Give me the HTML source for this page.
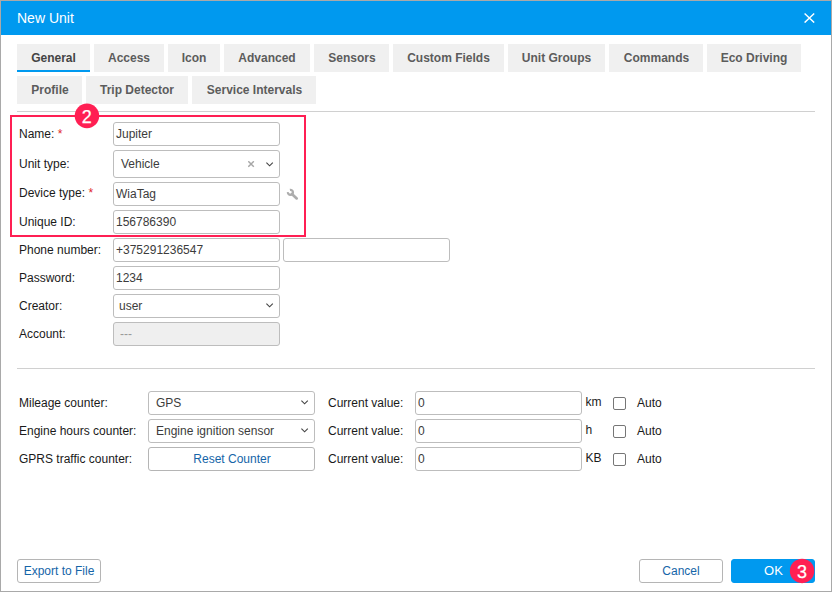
<!DOCTYPE html>
<html><head><meta charset="utf-8">
<style>
*{box-sizing:border-box;margin:0;padding:0}
html,body{width:832px;height:592px;overflow:hidden;background:#fff}
body{font-family:"Liberation Sans",Arial,sans-serif;font-size:12px;color:#222;position:relative}
.frame{position:absolute;left:0;top:0;width:832px;height:592px;border:1px solid #a9a9a9;pointer-events:none}
.title{position:absolute;left:1px;top:1px;width:830px;height:34px;background:#0099ef;color:#fff;font-size:14px;line-height:34px;padding-left:16px}
.close{position:absolute;left:804px;top:13px;width:11px;height:10px}
.tab{position:absolute;height:28px;background:#f0f0f0;color:#5c5c5c;font-weight:bold;font-size:12px;line-height:28px;text-align:center}
.tab.act{border-bottom:2px solid #0099ef;color:#444}
.hr{position:absolute;left:17px;width:798px;height:1px;background:#d0d0d0}
.lbl{position:absolute;font-size:12px;line-height:14px;color:#1a1a1a;white-space:nowrap}
.req{color:#e0262b}
.inp{position:absolute;height:24px;border:1px solid #bdbdbd;border-radius:3px;background:#fff;font-size:12px;line-height:22px;padding-left:2px;color:#3c3c3c;white-space:nowrap}
.inp.dis{background:#efefef;color:#999}
.sel{padding-left:5px}.sel7{padding-left:7px}
.chev{position:absolute;right:5px;top:8px;width:8px;height:6px}
.btn{position:absolute;height:24px;border:1px solid #b5b5b5;border-radius:3px;background:#fff;color:#1565a8;font-size:12px;line-height:22px;text-align:center}
.btn.pri{background:#0099ef;border-color:#0099ef;color:#fff;font-size:13px}
.badge{position:absolute;width:24.6px;height:24.6px;border-radius:50%;background:#ff1f53;color:#fff;font-size:17px;line-height:26px;text-align:center}
.bsvg{position:absolute;font-family:"Liberation Sans",Arial,sans-serif}
.hl{position:absolute;left:10px;top:115px;width:296px;height:122px;border:2px solid #ff1f53}
.cb{position:absolute;width:13px;height:13px;border:1px solid #767676;border-radius:2px;background:#fff}
</style></head><body>
<div class="title">New Unit</div>
<svg class="close" viewBox="0 0 11 10"><path d="M0.6 0.5L10.2 9.6M10.2 0.5L0.6 9.6" stroke="#fff" stroke-width="1.4" fill="none"/></svg>

<div class="tab act" style="left:17px;top:44px;width:73px">General</div>
<div class="tab" style="left:94px;top:44px;width:70px">Access</div>
<div class="tab" style="left:168px;top:44px;width:52px">Icon</div>
<div class="tab" style="left:224px;top:44px;width:86px">Advanced</div>
<div class="tab" style="left:314px;top:44px;width:75px;padding-left:1px">Sensors</div>
<div class="tab" style="left:393px;top:44px;width:111px">Custom Fields</div>
<div class="tab" style="left:508px;top:44px;width:97px">Unit Groups</div>
<div class="tab" style="left:609px;top:44px;width:94px;padding-left:1px">Commands</div>
<div class="tab" style="left:707px;top:44px;width:94px">Eco Driving</div>
<div class="tab" style="left:17px;top:76px;width:65px;padding-left:1px">Profile</div>
<div class="tab" style="left:86px;top:76px;width:102px">Trip Detector</div>
<div class="tab" style="left:192px;top:76px;width:124px;padding-left:1px">Service Intervals</div>
<div class="hr" style="top:111px"></div>

<div class="hl"></div>
<svg class="bsvg" style="left:70px;top:100px" width="34" height="32" viewBox="70 100 34 32"><circle cx="86.95" cy="115.85" r="12.3" fill="#ff1f53"/><text x="86.75" y="123" text-anchor="middle" font-size="18" fill="#fff" stroke="#fff" stroke-width="0.25">2</text></svg>

<div class="lbl" style="left:19px;top:127px">Name: <span class="req">*</span></div>
<div class="inp" style="left:113px;top:122px;width:167px">Jupiter</div>
<div class="lbl" style="left:19px;top:157px">Unit type:</div>
<div class="inp sel" style="left:113px;top:150px;width:167px;height:28px;line-height:26px;padding-left:7px">Vehicle
<svg style="position:absolute;left:134px;top:10px;width:7px;height:7px" viewBox="0 0 7 7"><path d="M0.3 0.3L5.8 5.8M5.8 0.3L0.3 5.8" stroke="#a6a6a6" stroke-width="1.45" fill="none"/></svg>
<svg class="chev" style="top:10.5px" viewBox="0 0 8 6"><path d="M0.4 0.6L3.6 3.8L6.8 0.6" stroke="#444" stroke-width="1.15" fill="none"/></svg></div>
<div class="lbl" style="left:19px;top:186px">Device type: <span class="req">*</span></div>
<div class="inp" style="left:113px;top:182px;width:167px">WiaTag</div>
<svg style="position:absolute;left:286px;top:188px;width:13px;height:13px" viewBox="0 0 13 13"><path d="M3.9 1.9 A2.55 2.55 0 1 1 1.9 4.1" stroke="#adadad" stroke-width="2.2" fill="none"/><path d="M5.9 5.9 L10.7 10.4" stroke="#adadad" stroke-width="2.7" stroke-linecap="round" fill="none"/></svg>
<div class="lbl" style="left:19px;top:215px">Unique ID:</div>
<div class="inp" style="left:113px;top:210px;width:167px">156786390</div>
<div class="lbl" style="left:19px;top:243px">Phone number:</div>
<div class="inp" style="left:113px;top:238px;width:167px">+375291236547</div>
<div class="inp" style="left:283px;top:238px;width:167px"></div>
<div class="lbl" style="left:19px;top:271px">Password:</div>
<div class="inp" style="left:113px;top:266px;width:167px">1234</div>
<div class="lbl" style="left:19px;top:299px">Creator:</div>
<div class="inp sel" style="left:113px;top:294px;width:167px">user
<svg class="chev" viewBox="0 0 8 6"><path d="M0.4 0.6L3.6 3.8L6.8 0.6" stroke="#444" stroke-width="1.15" fill="none"/></svg></div>
<div class="lbl" style="left:19px;top:327px">Account:</div>
<div class="inp dis sel" style="left:113px;top:322px;width:167px;padding-left:6px">---</div>

<div class="hr" style="top:368px"></div>

<div class="lbl" style="left:19px;top:396px">Mileage counter:</div>
<div class="inp sel7" style="left:148px;top:391px;width:167px">GPS
<svg class="chev" viewBox="0 0 8 6"><path d="M0.4 0.6L3.6 3.8L6.8 0.6" stroke="#444" stroke-width="1.15" fill="none"/></svg></div>
<div class="lbl" style="left:328px;top:396px">Current value:</div>
<div class="inp" style="left:415px;top:391px;width:167px">0</div>
<div class="lbl" style="left:585.6px;top:395px">km</div>
<div class="cb" style="left:613px;top:397px"></div>
<div class="lbl" style="left:637px;top:396px">Auto</div>

<div class="lbl" style="left:19px;top:424px">Engine hours counter:</div>
<div class="inp sel7" style="left:148px;top:419px;width:167px">Engine ignition sensor
<svg class="chev" viewBox="0 0 8 6"><path d="M0.4 0.6L3.6 3.8L6.8 0.6" stroke="#444" stroke-width="1.15" fill="none"/></svg></div>
<div class="lbl" style="left:328px;top:424px">Current value:</div>
<div class="inp" style="left:415px;top:419px;width:167px">0</div>
<div class="lbl" style="left:585.6px;top:423px">h</div>
<div class="cb" style="left:613px;top:425px"></div>
<div class="lbl" style="left:637px;top:424px">Auto</div>

<div class="lbl" style="left:19px;top:452px">GPRS traffic counter:</div>
<div class="btn" style="left:148px;top:447px;width:167px;padding-left:1px">Reset Counter</div>
<div class="lbl" style="left:328px;top:452px">Current value:</div>
<div class="inp" style="left:415px;top:447px;width:167px">0</div>
<div class="lbl" style="left:585.6px;top:451px">KB</div>
<div class="cb" style="left:613px;top:453px"></div>
<div class="lbl" style="left:637px;top:452px">Auto</div>

<div class="btn" style="left:17px;top:559px;width:84px">Export to File</div>
<div class="btn" style="left:639px;top:559px;width:84px">Cancel</div>
<div class="btn pri" style="left:731px;top:559px;width:84px;padding-left:1px">OK</div>
<svg class="bsvg" style="left:785px;top:555px" width="34" height="32" viewBox="785 555 34 32"><circle cx="802.05" cy="570.9" r="12.25" fill="#ff1f53"/><text x="802.05" y="577.8" text-anchor="middle" font-size="18" fill="#fff" stroke="#fff" stroke-width="0.25">3</text></svg>
<div class="frame"></div>
</body></html>
